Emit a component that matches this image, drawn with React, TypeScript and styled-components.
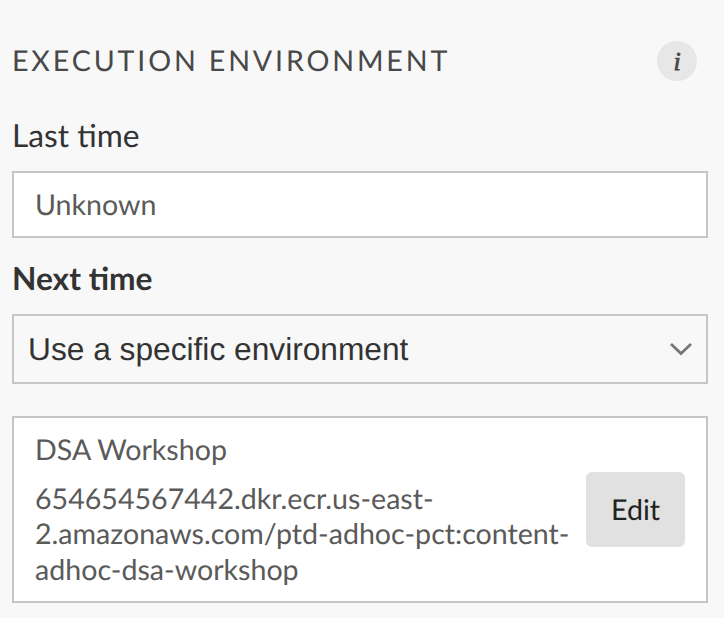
import React from "react";
import styled, { createGlobalStyle } from "styled-components";

const GlobalStyle = createGlobalStyle`
  * { box-sizing: border-box; }
  body {
    margin: 0;
    background: #f8f8f8;
    font-family: Lato, sans-serif;
    color: #333;
    -webkit-font-smoothing: antialiased;
    text-rendering: geometricPrecision;
  }
  button { text-rendering: inherit; }
`;

const Panel = styled.main`
  height: 618px;
  padding: 41px 16px 15px 12px;
  overflow: hidden;
  display: flex;
  flex-direction: column;
`;

const Header = styled.header`
  height: 40px;
  padding-right: 11px;
  display: flex;
  align-items: center;
  justify-content: space-between;
`;

const Title = styled.h1`
  margin: 0;
  font-size: 28.6px;
  font-weight: 400;
  line-height: 40px;
  letter-spacing: 2.86px;
  color: #484848;
  text-transform: uppercase;
`;

const InfoButton = styled.button`
  width: 40px;
  height: 40px;
  padding: 1px 0 0;
  border: 0;
  border-radius: 50%;
  background: #e7e7e7;
  color: #484848;
  font: italic 26px/39px "Liberation Serif", serif;
  -webkit-text-stroke: 0.8px #484848;
`;

const Label = styled.div<{ $strong?: boolean }>`
  font-size: 31.7px;
  line-height: 36px;
  height: 36px;
  font-weight: ${(p) => (p.$strong ? 700 : 400)};
  margin-top: ${(p) => (p.$strong ? 22 : 36)}px;
  margin-bottom: 18px;
`;

const ValueBox = styled.div`
  height: 67px;
  border: 2px solid #c6c6c6;
  background: #fff;
  padding: 1px 21px 0;
  font-size: 28.6px;
  line-height: 63px;
  color: #5a5a5a;
`;

const Select = styled.button`
  height: 70px;
  border: 2px solid #c6c6c6;
  background: #f8f8f8;
  padding: 0 13px 0 14px;
  display: flex;
  align-items: center;
  justify-content: space-between;
  font: 31.7px "Liberation Sans", sans-serif;
  color: #333;
`;

const EnvironmentCard = styled.section`
  margin-top: 32px;
  height: 187px;
  border: 2px solid #c6c6c6;
  background: #fff;
  padding: 0 21px;
  display: flex;
  align-items: center;
  justify-content: space-between;
`;

const Details = styled.div`
  padding-top: 2.6px;
  font-size: 28.6px;
  line-height: 35.75px;
  color: #5a5a5a;
  white-space: nowrap;
`;

const Name = styled.div`
  margin-bottom: 13px;
`;

const EditButton = styled.button`
  width: 99px;
  height: 75px;
  padding: 1px 0 0;
  border: 0;
  border-radius: 6px;
  background: #e1e1e1;
  color: #222;
  font: 28.6px Lato, sans-serif;
`;

export default function App() {
  return (
    <>
      <GlobalStyle />
      <Panel>
        <Header>
          <Title>Execution environment</Title>
          <InfoButton aria-label="Information">i</InfoButton>
        </Header>
        <Label>Last time</Label>
        <ValueBox>Unknown</ValueBox>
        <Label $strong>Next time</Label>
        <Select>
          Use a specific environment
          <svg width="24" height="14" viewBox="0 0 24 14" fill="none">
            <path d="M2 2L12 11.5L22 2" stroke="#777" strokeWidth="2.8" />
          </svg>
        </Select>
        <EnvironmentCard>
          <Details>
            <Name>DSA Workshop</Name>
            654654567442.dkr.ecr.us-east-<br />
            2.amazonaws.com/ptd-adhoc-pct:content-<br />
            adhoc-dsa-workshop
          </Details>
          <EditButton>Edit</EditButton>
        </EnvironmentCard>
      </Panel>
    </>
  );
}
